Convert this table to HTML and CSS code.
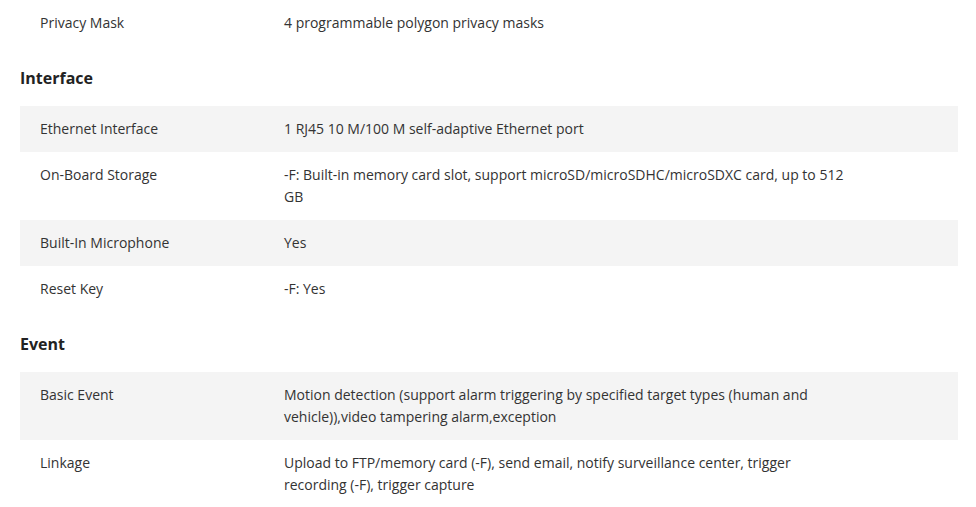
FILE: index.html
```html
<!DOCTYPE html>
<html>
<head>
<meta charset="utf-8">
<link rel="stylesheet" href="styles.css">
</head>
<body>
<div class="spec">
  <div class="table">
    <div class="row"><div class="label">Privacy Mask</div><div class="value">4 programmable polygon privacy masks</div></div>
  </div>
  <h3 class="heading">Interface</h3>
  <div class="table">
    <div class="row alt"><div class="label">Ethernet Interface</div><div class="value">1 RJ45 10 M/100 M self-adaptive Ethernet port</div></div>
    <div class="row"><div class="label">On-Board Storage</div><div class="value">-F: Built-in memory card slot, support microSD/microSDHC/microSDXC card, up to 512 GB</div></div>
    <div class="row alt"><div class="label">Built-In Microphone</div><div class="value">Yes</div></div>
    <div class="row"><div class="label">Reset Key</div><div class="value">-F: Yes</div></div>
  </div>
  <h3 class="heading">Event</h3>
  <div class="table">
    <div class="row alt"><div class="label">Basic Event</div><div class="value">Motion detection (support alarm triggering by specified target types (human and vehicle)),video tampering alarm,exception</div></div>
    <div class="row"><div class="label">Linkage</div><div class="value">Upload to FTP/memory card (-F), send email, notify surveillance center, trigger recording (-F), trigger capture</div></div>
  </div>
</div>
</body>
</html>
```
FILE: styles.css
```css
html, body {
  margin: 0;
  padding: 0;
  background: #fff;
}
body {
  font-family: "Open Sans", "Liberation Sans", sans-serif;
  font-size: 14px;
  line-height: 22px;
  color: #333;
}
.spec {
  padding: 0 18px 0 20px;
}
.row {
  display: grid;
  grid-template-columns: 264px 1fr;
}
.row.alt {
  background: #f4f4f4;
}
.label {
  padding: 12px 0 12px 20px;
}
.value {
  padding: 12px 110px 12px 0;
}
.heading {
  margin: 20px 0 16px;
  font-size: 16px;
  line-height: 24px;
  font-weight: 700;
  color: #222;
}
```
